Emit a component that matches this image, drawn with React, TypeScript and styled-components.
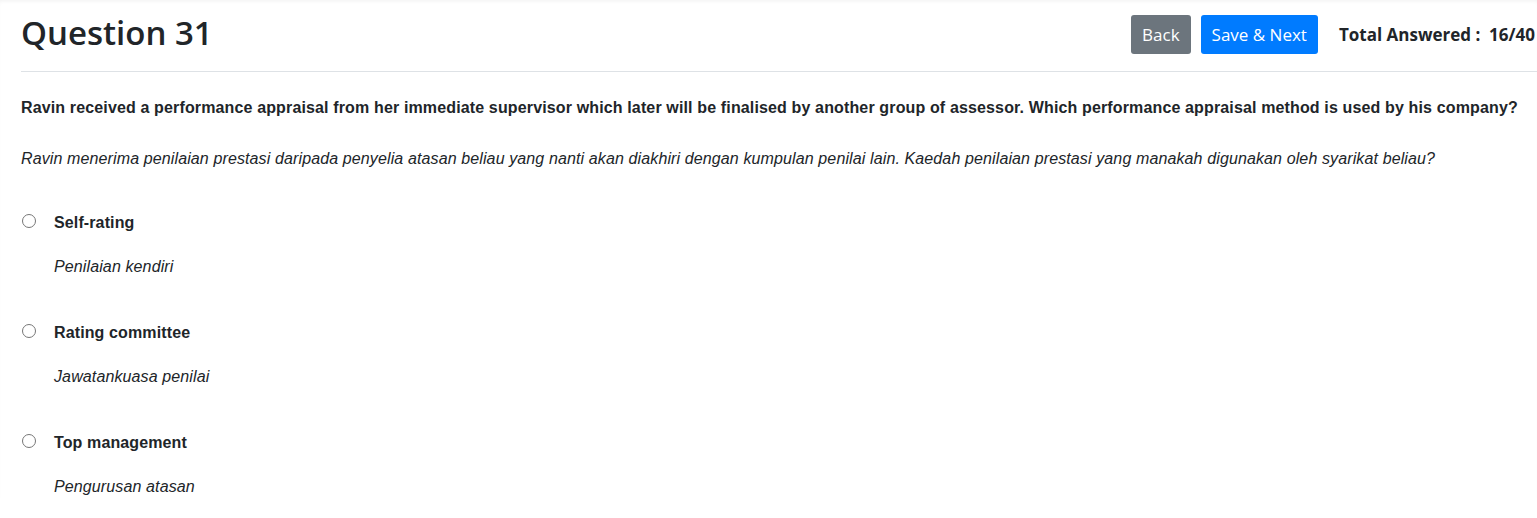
import React from "react";
import styled, { createGlobalStyle } from "styled-components";

const Global = createGlobalStyle`
  body { margin: 0; background: #fff; color: #212529; font-family: "Liberation Sans", Arial, sans-serif; }
`;

const Page = styled.div`
  padding: 0 0 0 21px;
  box-shadow: inset 0 3px 4px -2px rgba(0,0,0,0.06);
`;

const Header = styled.header`
  display: flex;
  align-items: center;
  justify-content: space-between;
  height: 71px;
  border-bottom: 1px solid #dee2e6;
`;

const Title = styled.h1`
  margin: 0;
  font-family: "Open Sans", "Noto Sans", sans-serif;
  font-weight: 600;
  font-size: 33px;
  color: #212529;
  line-height: 1;
  padding-bottom: 7px;
`;

const Actions = styled.div`
  display: flex;
  align-items: center;
  gap: 10px;
  margin-right: 2px;
  padding-bottom: 3px;
`;

const Button = styled.button<{ $variant: "secondary" | "primary" }>`
  font-family: "Open Sans", "Noto Sans", sans-serif;
  font-size: 17px;
  line-height: 27px;
  padding: 6px 11px;
  border: none;
  border-radius: 3px;
  color: #fff;
  background: ${(p) => (p.$variant === "primary" ? "#007bff" : "#6c757d")};
`;

const Total = styled.div`
  font-family: "Open Sans", "Noto Sans", sans-serif;
  font-weight: 700;
  font-size: 17px;
  margin-left: 11px;
  white-space: nowrap;
`;

const Body = styled.main`
  padding-top: 25px;
`;

const QuestionText = styled.p`
  margin: 0;
  font-weight: 700;
  font-size: 16px;
  line-height: 22px;
  letter-spacing: 0.14px;
`;

const Translation = styled.p`
  margin: 0;
  font-style: italic;
  font-size: 16px;
  line-height: 22px;
  letter-spacing: 0.12px;
`;

const QuestionTranslation = styled(Translation)`
  margin-top: 29px;
`;

const Options = styled.div`
  display: flex;
  flex-direction: column;
  gap: 44px;
  margin-top: 42px;
`;

const Option = styled.label`
  display: grid;
  grid-template-columns: 33px 1fr;
  row-gap: 22px;
  align-items: center;
`;

const Radio = styled.span`
  width: 14px;
  height: 14px;
  border: 1px solid #767676;
  border-radius: 50%;
  box-sizing: border-box;
  margin-left: 1px;
  margin-top: -4px;
`;

const OptionLabel = styled.span`
  font-weight: 700;
  font-size: 16px;
  line-height: 22px;
  letter-spacing: 0.12px;
`;

const OptionTranslation = styled(Translation)`
  grid-column: 2;
`;

const options = [
  { en: "Self-rating", ms: "Penilaian kendiri" },
  { en: "Rating committee", ms: "Jawatankuasa penilai" },
  { en: "Top management", ms: "Pengurusan atasan" },
];

export default function App() {
  return (
    <Page>
      <Global />
      <Header>
        <Title>Question 31</Title>
        <Actions>
          <Button $variant="secondary">Back</Button>
          <Button $variant="primary">Save &amp; Next</Button>
          <Total>Total Answered :&nbsp; 16/40</Total>
        </Actions>
      </Header>
      <Body>
        <QuestionText>
          Ravin received a performance appraisal from her immediate supervisor which later will be finalised by another group of assessor. Which performance appraisal method is used by his company?
        </QuestionText>
        <QuestionTranslation>
          Ravin menerima penilaian prestasi daripada penyelia atasan beliau yang nanti akan diakhiri dengan kumpulan penilai lain. Kaedah penilaian prestasi yang manakah digunakan oleh syarikat beliau?
        </QuestionTranslation>
        <Options>
          {options.map((o) => (
            <Option key={o.en}>
              <Radio />
              <OptionLabel>{o.en}</OptionLabel>
              <OptionTranslation>{o.ms}</OptionTranslation>
            </Option>
          ))}
        </Options>
      </Body>
    </Page>
  );
}
